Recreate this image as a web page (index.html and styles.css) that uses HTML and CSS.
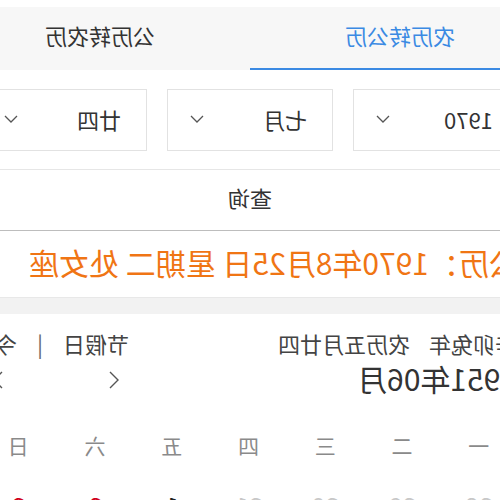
FILE: index.html
```
<!DOCTYPE html>
<html>
	<head>
		<title>农历转公历</title>

		<link rel="stylesheet" href="styles.css">
	</head>

	<body>
		<div class="page">
			<div class="tabs">
				<div class="tab active">农历转公历</div>
				<div class="tab">公历转农历</div>
			</div>

			<div class="selects">
				<div class="select">
					<span>1970</span>
					<svg class="chevron" width="14" height="8" viewBox="0 0 14 8"><path d="M1 1 L7 7 L13 1" fill="none" stroke="#555" stroke-width="1.3"/></svg>
				</div>
				<div class="select">
					<span>七月</span>
					<svg class="chevron" width="14" height="8" viewBox="0 0 14 8"><path d="M1 1 L7 7 L13 1" fill="none" stroke="#555" stroke-width="1.3"/></svg>
				</div>
				<div class="select">
					<span>廿四</span>
					<svg class="chevron" width="14" height="8" viewBox="0 0 14 8"><path d="M1 1 L7 7 L13 1" fill="none" stroke="#555" stroke-width="1.3"/></svg>
				</div>
			</div>

			<div class="query">查询</div>

			<div class="result">公历：1970年8月25日 星期二 处女座</div>

			<div class="divider"></div>

			<div class="calendar">
				<div class="calHeader">
					<div class="lunarInfo">
						<span>辛卯兔年</span>
						<span class="lunarDay">农历五月廿四</span>
					</div>
					<div class="links">
						<span>节假日</span>
						<span class="sep">|</span>
						<span>今天</span>
					</div>
				</div>

				<div class="monthRow">
					<div class="monthTitle">1951年06月</div>
					<div class="arrows">
						<svg width="12" height="20" viewBox="0 0 12 20"><path d="M10 2 L2 10 L10 18" fill="none" stroke="#555" stroke-width="1.4"/></svg>
						<svg width="12" height="20" viewBox="0 0 12 20"><path d="M2 2 L10 10 L2 18" fill="none" stroke="#555" stroke-width="1.4"/></svg>
					</div>
				</div>

				<div class="weekdays">
					<span>一</span><span>二</span><span>三</span><span>四</span><span>五</span><span>六</span><span>日</span>
				</div>

				<div class="days">
					<span class="other">28</span>
					<span class="other">29</span>
					<span class="other">30</span>
					<span class="other">31</span>
					<span>1</span>
					<span class="weekend">2</span>
					<span class="weekend">3</span>
				</div>
			</div>
		</div>
	</body>
</html>
```

FILE: styles.css
```
html, body {
	margin: 0;
	overflow: hidden;
	background: #fff;
}

/* the screenshot is a mirrored, wider page */
.page {
	width: 600px;
	margin-left: -50px;
	padding-top: 7px;
	transform: scaleX(-1);
	font-family: "Noto Sans CJK SC", "Noto Sans", sans-serif;
	color: #333;
}

.tabs {
	display: flex;
	height: 63px;
	background-color: #f7f7f7;
}

.tab {
	flex: 1;
	display: flex;
	align-items: center;
	justify-content: center;
	padding-bottom: 7px;
	font-size: 22px;
	color: #333;
	box-sizing: border-box;
}

.tab.active {
	color: #3b8ae3;
	border-bottom: 2px solid #3b8ae3;
	padding-bottom: 5px;
}

.selects {
	display: flex;
	gap: 20px;
	padding: 0 31px;
	margin: 19px 0 18px 0;
}

.select {
	flex: 1;
	height: 62px;
	box-sizing: border-box;
	border: 1px solid #e2e2e2;
	display: flex;
	align-items: center;
	justify-content: space-between;
	padding: 0 22px 2px 25px;
	font-size: 22px;
	color: #333;
}

.query {
	height: 62px;
	box-sizing: border-box;
	border-top: 1px solid #e6e6e6;
	border-bottom: 1px solid #bdbdbd;
	display: flex;
	align-items: center;
	justify-content: center;
	padding-bottom: 7px;
	font-size: 22px;
	color: #333;
}

.result {
	height: 66px;
	line-height: 62px;
	padding-left: 31px;
	font-size: 30px;
	color: #f07514;
	white-space: nowrap;
}

.divider {
	height: 16px;
	background-color: #f2f2f2;
	border-top: 1px solid #e8e8e8;
}

.calendar {
	padding: 14px 23px 0 33px;
}

.calHeader {
	display: flex;
	justify-content: space-between;
	font-size: 22px;
	line-height: 30px;
	color: #444;
}

.lunarDay {
	margin-left: 14px;
}

.links {
	display: flex;
	gap: 20px;
}

.sep {
	color: #666;
}

.monthRow {
	display: flex;
	justify-content: space-between;
	align-items: flex-start;
	height: 40px;
}

.monthTitle {
	font-size: 30px;
	line-height: 40px;
	color: #333;
}

.arrows {
	display: flex;
	gap: 104px;
	margin-top: 12px;
	margin-right: 19px;
}

.weekdays, .days {
	display: grid;
	grid-template-columns: repeat(7, 1fr);
	width: 537px;
	text-align: center;
}

.weekdays {
	margin-top: 32px;
	font-size: 21px;
	line-height: 30px;
	color: #8a8a8a;
}

.days {
	margin-top: 28px;
	font-size: 25px;
	line-height: 34px;
	color: #222;
}

.days .other {
	color: #c8c8c8;
}

.days .weekend {
	color: #d0021b;
}
```
